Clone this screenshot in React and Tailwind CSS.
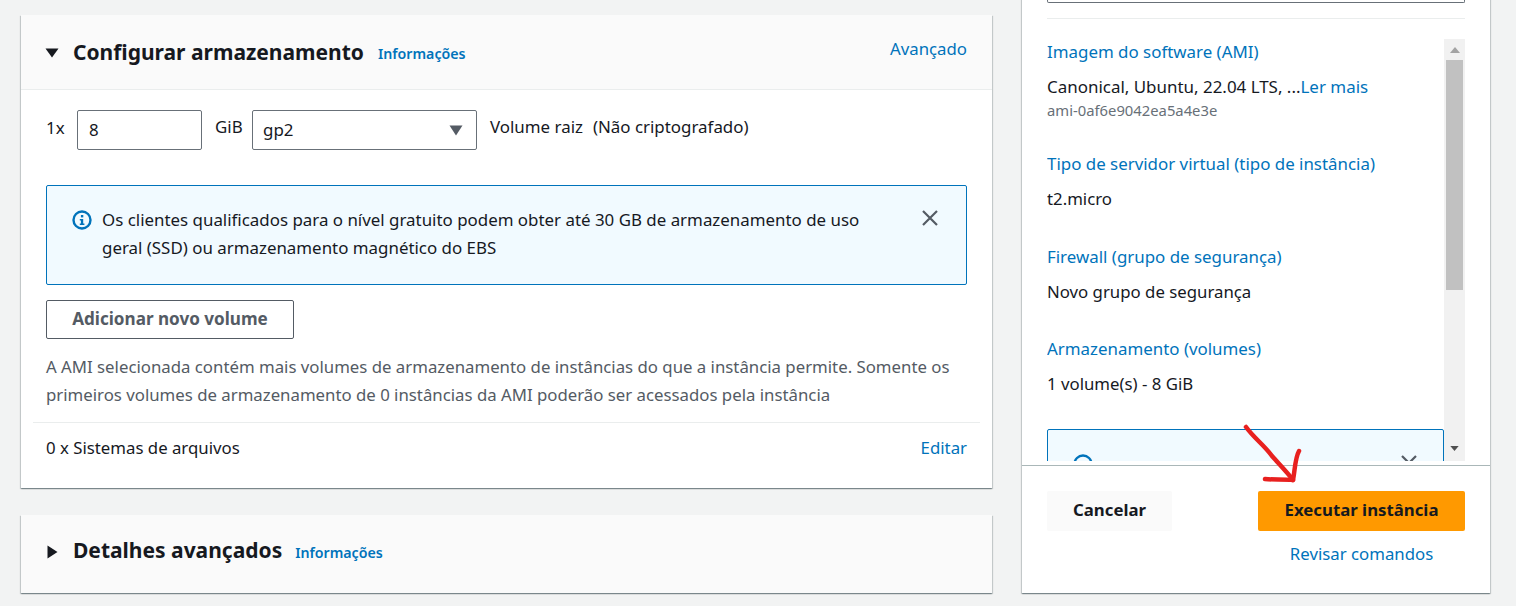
// App.jsx
import React from 'react';

const FONT = 'font-["Noto_Sans","Open_Sans",sans-serif]';

const SummaryItem = ({ title, className = '', children }) => (
    <div className={className}>
        <a className="block text-[16.9px] leading-[24px] text-[#0073bb]">{title}</a>
        {children}
    </div>
);

const App = () => {
    return (
        <div className={`${FONT} relative flex h-[606px] w-[1516px] items-start overflow-hidden bg-[#f2f3f3] text-[16.8px] text-[#16191f]`}>
            {/* Left column */}
            <div className="ml-[21px] mt-[15px] flex w-[971px] flex-col gap-[27px]">
                <section className="bg-white shadow-[0_1px_1px_0_rgba(0,28,36,0.3),1px_1px_1px_0_rgba(0,28,36,0.15),-1px_1px_1px_0_rgba(0,28,36,0.15)]">
                    <header className="flex h-[75px] items-start justify-between border-b border-[#eaeded] bg-[#fafafa] pl-[25px] pr-[25px]">
                        <div className="flex items-center pt-[22px]">
                            <svg width="14" height="10" viewBox="0 0 14 10" className="mr-[13px] mt-[2px] -translate-x-[1px]">
                                <path d="M0.5 0.5h13L7 9.5z" fill="#16191f" />
                            </svg>
                            <h2 className="text-[21px] font-bold leading-[30px]">Configurar armazenamento</h2>
                            <a className="ml-[14px] mt-[4px] text-[14.2px] font-semibold leading-[20px] text-[#0073bb]">Informações</a>
                        </div>
                        <a className="pt-[22px] leading-[24px] text-[#0073bb]">Avançado</a>
                    </header>

                    <div className="px-[25px]">
                        <div className="mt-[20px] flex h-[40px] items-start text-[16.9px]">
                            <span className="mt-[6px] w-[31px] leading-[24px]">1x</span>
                            <div className="flex h-[40px] w-[125px] items-center rounded-[2px] border border-[#687078] pl-[11px]">8</div>
                            <span className="ml-[13px] mt-[5px] w-[37px] leading-[24px]">GiB</span>
                            <div className="flex h-[40px] w-[225px] items-center justify-between rounded-[2px] border border-[#687078] pl-[10px] pr-[13px]">
                                <span>gp2</span>
                                <svg width="14" height="11" viewBox="0 0 14 11">
                                    <path d="M0.5 0.5h13L7 10.5z" fill="#545b64" />
                                </svg>
                            </div>
                            <span className="ml-[13px] mt-[5px] leading-[24px]">Volume raiz</span>
                            <span className="ml-[10px] mt-[5px] leading-[24px]">(Não criptografado)</span>
                        </div>

                        <div className="mt-[35px] flex h-[100px] items-start rounded-[2px] border border-[#0073bb] bg-[#f1faff] pl-[25px] pr-[25px] pt-[20px]">
                            <svg width="20" height="20" viewBox="0 0 20 20" className="mt-[4px] shrink-0">
                                <circle cx="10" cy="10" r="8.5" fill="none" stroke="#0073bb" strokeWidth="2.4" />
                                <rect x="8.9" y="5" width="2.4" height="2.4" fill="#0073bb" />
                                <path d="M7.8 9h3.4v4.6h1.2v1.5H7.8v-1.5h1.1v-3.1H7.8z" fill="#0073bb" />
                            </svg>
                            <p className="ml-[10px] w-[785px] text-[16.9px] leading-[28px]">
                                Os clientes qualificados para o nível gratuito podem obter até 30 GB de armazenamento de uso geral (SSD) ou armazenamento magnético do EBS
                            </p>
                            <svg width="18" height="18" viewBox="0 0 18 18" className="ml-auto mr-[2px] mt-[3px] shrink-0">
                                <path d="M2 2l14 14M16 2L2 16" stroke="#545b64" strokeWidth="2.2" />
                            </svg>
                        </div>

                        <button className="mt-[15px] flex h-[39px] w-[248px] items-center justify-center rounded-[2px] border border-[#545b64] bg-white pb-[2px] text-[17.1px] font-bold text-[#545b64]">
                            Adicionar novo volume
                        </button>

                        <p className="mt-[14px] w-[915px] leading-[28px] text-[#545b64]">
                            A AMI selecionada contém mais volumes de armazenamento de instâncias do que a instância permite. Somente os primeiros volumes de armazenamento de 0 instâncias da AMI poderão ser acessados pela instância
                        </p>
                    </div>

                    <div className="mx-[12px] mt-[13px] flex h-[66px] items-start justify-between border-t border-[#eaeded] px-[13px] pt-[13px]">
                        <span className="leading-[24px]">0 x Sistemas de arquivos</span>
                        <a className="leading-[24px] text-[#0073bb]">Editar</a>
                    </div>
                </section>

                <section className="flex h-[78px] items-start bg-[#fafafa] pl-[27px] pt-[20px] shadow-[0_1px_1px_0_rgba(0,28,36,0.3),1px_1px_1px_0_rgba(0,28,36,0.15),-1px_1px_1px_0_rgba(0,28,36,0.15)]">
                    <svg width="11" height="14" viewBox="0 0 11 14" className="mr-[14px] mt-[10px] -translate-x-[1px]">
                        <path d="M0.5 0.5L10.5 7 0.5 13.5z" fill="#16191f" />
                    </svg>
                    <h2 className="text-[21px] font-bold leading-[30px]">Detalhes avançados</h2>
                    <a className="ml-[13px] mt-[8px] text-[14.2px] font-semibold leading-[20px] text-[#0073bb]">Informações</a>
                </section>
            </div>

            {/* Right summary card */}
            <aside className="ml-[30px] mt-[-10px] flex h-[603px] w-[468px] flex-col bg-white shadow-[0_1px_1px_0_rgba(0,28,36,0.3),1px_1px_1px_0_rgba(0,28,36,0.15),-1px_1px_1px_0_rgba(0,28,36,0.15)]">
                <div className="mx-[25px] h-[13px] rounded-b-[2px] border-x border-b border-[#687078]" />
                <div className="mx-[25px] mt-[15px] border-t border-[#eaeded]" />

                <div className="mx-[25px] mt-[20px] flex h-[422px] overflow-hidden">
                    <div className="w-[397px] shrink-0 overflow-hidden">
                        <SummaryItem title="Imagem do software (AMI)" className="pt-[1px]">
                            <div className="mt-[11px] text-[16.95px] leading-[24px]">
                                Canonical, Ubuntu, 22.04 LTS, ...<a className="text-[#0073bb]">Ler mais</a>
                            </div>
                            <div className="mt-[1px] text-[14.8px] leading-[20px] text-[#687078]">ami-0af6e9042ea5a4e3e</div>
                        </SummaryItem>
                        <SummaryItem title="Tipo de servidor virtual (tipo de instância)" className="mt-[32px]">
                            <div className="mt-[11px] leading-[24px]">t2.micro</div>
                        </SummaryItem>
                        <SummaryItem title="Firewall (grupo de segurança)" className="mt-[34px]">
                            <div className="mt-[11px] leading-[24px]">Novo grupo de segurança</div>
                        </SummaryItem>
                        <SummaryItem title="Armazenamento (volumes)" className="mt-[33px]">
                            <div className="mt-[11px] leading-[24px]">1 volume(s) - 8 GiB</div>
                        </SummaryItem>
                        <div className="mt-[33px] h-[60px] rounded-[2px] border border-[#0073bb] bg-[#f1faff] pl-[25px] pt-[24px]">
                            <div className="flex items-start justify-between pr-[25px]">
                                <svg width="20" height="20" viewBox="0 0 20 20">
                                    <circle cx="10" cy="10" r="8.5" fill="none" stroke="#0073bb" strokeWidth="2.4" />
                                </svg>
                                <svg width="18" height="18" viewBox="0 0 18 18">
                                    <path d="M2 2l14 14M16 2L2 16" stroke="#545b64" strokeWidth="2.2" />
                                </svg>
                            </div>
                        </div>
                    </div>
                    {/* Scrollbar */}
                    <div className="flex w-[21px] shrink-0 flex-col items-center bg-[#f1f1f1]">
                        <div className="flex h-[21px] w-full items-center justify-center">
                            <svg width="10" height="6" viewBox="0 0 10 6"><path d="M5 0l5 6H0z" fill="#a3a3a3" /></svg>
                        </div>
                        <div className="h-[230px] w-[17px] bg-[#c1c1c1]" />
                        <div className="mt-auto flex h-[15px] w-full items-start justify-center">
                            <svg width="9" height="5" viewBox="0 0 10 6"><path d="M0 0h10L5 6z" fill="#505050" /></svg>
                        </div>
                    </div>
                </div>

                <div className="mt-[4px] flex-1 border-t border-[#aab7b8] px-[25px] pt-[25px]">
                    <div className="flex items-start justify-between">
                        <button className="flex h-[40px] w-[125px] items-center justify-center rounded-[2px] bg-[#fafafa] pb-[2px] font-bold">Cancelar</button>
                        <div className="flex w-[207px] flex-col items-center">
                            <button className="flex h-[40px] w-full items-center justify-center rounded-[2px] bg-[#ff9900] pb-[2px] font-bold">Executar instância</button>
                            <a className="mt-[11px] leading-[24px] text-[#0073bb]">Revisar comandos</a>
                        </div>
                    </div>
                </div>
            </aside>

            {/* Hand-drawn annotation */}
            <svg className="absolute left-[1240px] top-[420px]" width="70" height="70" viewBox="0 0 70 70" fill="none">
                <path d="M6 7C14 18 24 25 32 36C39 44 47 52 53 60" stroke="#e8201f" strokeWidth="4.5" strokeLinecap="round" />
                <path d="M59 31C55 38 55 50 53 60C43 59 33 60 25 59" stroke="#e8201f" strokeWidth="4.5" strokeLinecap="round" strokeLinejoin="round" />
            </svg>
        </div>
    );
};

export default App;
